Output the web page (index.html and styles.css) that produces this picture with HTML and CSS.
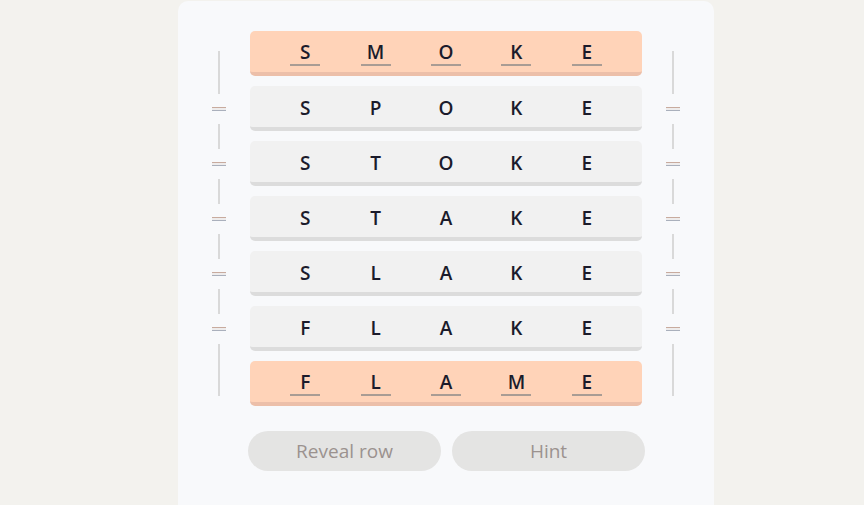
FILE: index.html
```html
<!DOCTYPE html>
<html lang="en">
<head>
<meta charset="utf-8">
<title>Word ladder</title>
<link rel="stylesheet" href="styles.css">
</head>
<body>
<main class="card">
  <div class="board">
    <div class="rail">
      <span class="seg seg-first"></span><span class="mark"></span>
      <span class="seg"></span><span class="mark"></span>
      <span class="seg"></span><span class="mark"></span>
      <span class="seg"></span><span class="mark"></span>
      <span class="seg"></span><span class="mark"></span>
      <span class="seg seg-last"></span>
    </div>
    <div class="rows">
      <div class="row fixed"><span>S</span><span>M</span><span>O</span><span>K</span><span>E</span></div>
      <div class="row"><span>S</span><span>P</span><span>O</span><span>K</span><span>E</span></div>
      <div class="row"><span>S</span><span>T</span><span>O</span><span>K</span><span>E</span></div>
      <div class="row"><span>S</span><span>T</span><span>A</span><span>K</span><span>E</span></div>
      <div class="row"><span>S</span><span>L</span><span>A</span><span>K</span><span>E</span></div>
      <div class="row"><span>F</span><span>L</span><span>A</span><span>K</span><span>E</span></div>
      <div class="row fixed"><span>F</span><span>L</span><span>A</span><span>M</span><span>E</span></div>
    </div>
    <div class="rail">
      <span class="seg seg-first"></span><span class="mark"></span>
      <span class="seg"></span><span class="mark"></span>
      <span class="seg"></span><span class="mark"></span>
      <span class="seg"></span><span class="mark"></span>
      <span class="seg"></span><span class="mark"></span>
      <span class="seg seg-last"></span>
    </div>
  </div>
  <div class="actions">
    <button class="btn" type="button">Reveal row</button>
    <button class="btn" type="button">Hint</button>
  </div>
</main>
</body>
</html>
```
FILE: styles.css
```css
html, body {
  margin: 0;
  padding: 0;
  background: #f3f2ee;
  height: 100%;
  overflow: hidden;
}
body {
  font-family: "Open Sans", "Noto Sans", sans-serif;
  padding: 1px 0 0 178px;
  box-sizing: border-box;
}
.card {
  width: 536px;
  height: 504px;
  background: #f8f9fb;
  border-radius: 10px 10px 0 0;
  padding: 30px 0 0 0;
  box-sizing: border-box;
}
.board {
  display: flex;
  gap: 23px;
  padding-left: 33px;
}
.rail {
  width: 16px;
  display: flex;
  flex-direction: column;
  align-items: center;
  padding-top: 20px;
}
.seg {
  width: 2px;
  height: 25px;
  background: #d9d9d9;
}
.seg-first { height: 43px; }
.seg-last { height: 52px; }
.mark {
  width: 14px;
  height: 30px;
  position: relative;
}
.mark::before {
  content: "";
  position: absolute;
  left: 0;
  right: 0;
  top: 13px;
  height: 2px;
  border-top: 1px solid #c8ab9e;
  border-bottom: 1px solid #aab0bc;
  box-sizing: content-box;
  background: #eeecec;
}
.rows {
  width: 392px;
  display: flex;
  flex-direction: column;
  gap: 10px;
}
.row {
  height: 45px;
  box-sizing: border-box;
  border-radius: 5px;
  background: #f1f1f1;
  border-bottom: 4px solid #dcdcdc;
  display: grid;
  grid-template-columns: repeat(5, 1fr);
  padding: 2px 20px 0;
  align-items: center;
  justify-items: center;
  font-size: 19px;
  font-weight: 600;
  color: #1b1b2b;
}
.row span {
  width: 30px;
  text-align: center;
  line-height: 22px;
  padding-top: 1px;
}
.row.fixed {
  background: #ffd3b8;
  border-bottom-color: #ecbfa9;
}
.row.fixed span {
  border-bottom: 2.5px solid #a99c94;
  padding-bottom: 1px;
  padding-top: 2px;
}
.actions {
  display: flex;
  gap: 11px;
  width: 397px;
  margin: 25px 0 0 70px;
}
.btn {
  flex: 1;
  height: 40px;
  border: none;
  border-radius: 20px;
  background: #e4e4e3;
  color: #9b928f;
  font-family: "Open Sans", "Noto Sans", sans-serif;
  font-size: 19px;
  padding: 0;
}
```
